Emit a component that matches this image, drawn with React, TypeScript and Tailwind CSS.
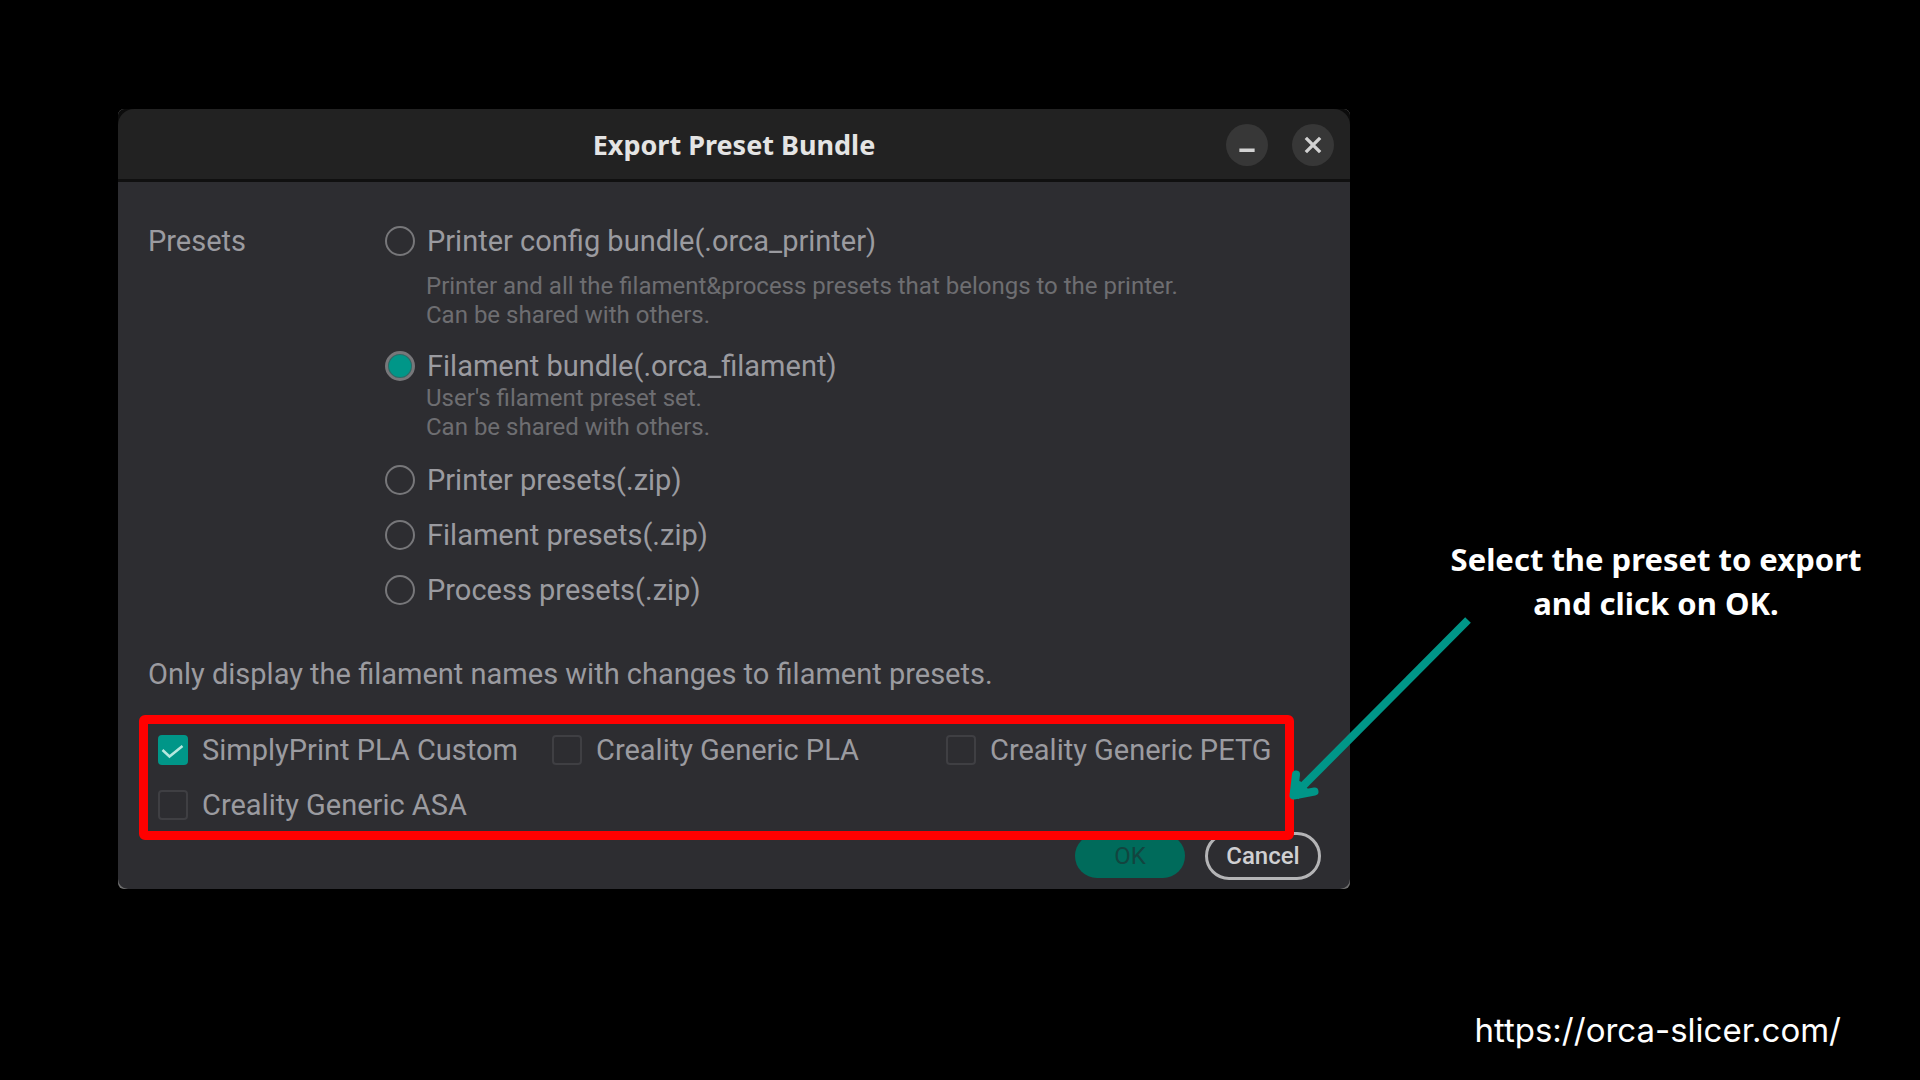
import { useState } from "react";

type PresetOption = {
  id: string;
  label: string;
  description?: string[];
  // spacing below the whole option and above its description
  className: string;
  descriptionClassName?: string;
};

const PRESET_OPTIONS: PresetOption[] = [
  {
    id: "printer-bundle",
    label: "Printer config bundle(.orca_printer)",
    description: [
      "Printer and all the filament&process presets that belongs to the printer.",
      "Can be shared with others.",
    ],
    className: "mb-[18px]",
    descriptionClassName: "mt-[13px]",
  },
  {
    id: "filament-bundle",
    label: "Filament bundle(.orca_filament)",
    description: ["User's filament preset set.", "Can be shared with others."],
    className: "mb-5",
  },
  { id: "printer-zip", label: "Printer presets(.zip)", className: "mb-[19px]" },
  { id: "filament-zip", label: "Filament presets(.zip)", className: "mb-[19px]" },
  { id: "process-zip", label: "Process presets(.zip)", className: "" },
];

const FILAMENTS = [
  "SimplyPrint PLA Custom",
  "Creality Generic PLA",
  "Creality Generic PETG",
  "Creality Generic ASA",
];

function MinimizeIcon() {
  return (
    <svg viewBox="0 0 44 44" className="h-full w-full" aria-hidden="true">
      <path d="M14 27.500h16" stroke="#d2d2d2" strokeWidth="3.5" />
    </svg>
  );
}

function CloseIcon() {
  return (
    <svg viewBox="0 0 44 44" className="h-full w-full" aria-hidden="true">
      <path d="M14.500 14.500l15 15M29.500 14.500l-15 15" stroke="#d2d2d2" strokeWidth="3.5" />
    </svg>
  );
}

function CheckIcon() {
  return (
    <svg viewBox="0 0 30 30" className="pointer-events-none absolute inset-0 h-full w-full" aria-hidden="true">
      <path d="M4.500 15l7 6.500L24.500 11" fill="none" stroke="#b5e8df" strokeWidth="2.5" />
    </svg>
  );
}

function Arrow() {
  return (
    <svg
      viewBox="0 0 190 192"
      className="pointer-events-none absolute top-[78px] -left-16 h-[192px] w-[190px]"
      fill="none"
      stroke="#009688"
      strokeLinejoin="round"
      aria-hidden="true"
    >
      <path d="M182 5L8 180" strokeWidth="8" />
      <path d="M10 159.500L7.500 180.500L28.500 176.500" strokeWidth="8" strokeLinecap="round" />
      <path d="M8 180l10-10" strokeWidth="12" />
    </svg>
  );
}

export default function App() {
  const [preset, setPreset] = useState("filament-bundle");
  const [selected, setSelected] = useState<string[]>(["SimplyPrint PLA Custom"]);

  const toggleFilament = (name: string) => {
    setSelected((prev) => (prev.includes(name) ? prev.filter((n) => n !== name) : [...prev, name]));
  };

  return (
    <main className="flex min-h-screen flex-col bg-black">
      <div className="grid grid-cols-[118fr_1232fr_570fr] pt-[109px]">
        {/* Dialog */}
        <section className="col-start-2 overflow-hidden rounded-md bg-[#707070] font-['Roboto',sans-serif]">
          <header className="grid grid-cols-[1fr_auto_1fr] items-center rounded-t-2xl border-b-[3px] border-[#101010] bg-[#222222] px-4 pt-[15px] pb-[13px] shadow-[0_0_0_4px_#0c0c0c]">
            <h1 className="col-start-2 font-['Noto_Sans',sans-serif] text-[27px] leading-9 font-bold text-[#e4e4e4]">
              Export Preset Bundle
            </h1>
            <div className="flex justify-end gap-6">
              <button type="button" aria-label="Minimize" className="h-[42px] w-[42px] rounded-full bg-[#373737]">
                <MinimizeIcon />
              </button>
              <button type="button" aria-label="Close" className="h-[42px] w-[42px] rounded-full bg-[#373737]">
                <CloseIcon />
              </button>
            </div>
          </header>

          <div className="rounded-b-[10px] bg-[#2d2d31] pt-[41px] pb-[9px] text-[29px] leading-9 text-[#9b9ba0]">
            <div role="radiogroup" aria-labelledby="presets-label" className="grid grid-cols-[237px_1fr] px-[30px]">
              <span id="presets-label">Presets</span>
              <div>
                {PRESET_OPTIONS.map((option) => (
                  <div key={option.id} className={option.className}>
                    <label className="flex items-center gap-3">
                      <input
                        type="radio"
                        name="preset"
                        checked={preset === option.id}
                        onChange={() => setPreset(option.id)}
                        className="h-[30px] w-[30px] appearance-none rounded-full border-2 border-[#77777a] checked:border-[3px] checked:bg-[#009688] checked:bg-clip-padding checked:shadow-[inset_0_0_0_1px_#2f6a66]"
                      />
                      {option.label}
                    </label>
                    {option.description && (
                      <div
                        className={`pl-[41px] text-2xl leading-[29px] text-[#6e6e71] ${option.descriptionClassName ?? ""}`}
                      >
                        {option.description.map((line) => (
                          <p key={line}>{line}</p>
                        ))}
                      </div>
                    )}
                  </div>
                ))}
              </div>
            </div>

            <p className="mt-12 px-[30px]">Only display the filament names with changes to filament presets.</p>

            {/* Highlighted filament list */}
            <div className="relative z-10 mt-[23px] mr-14 ml-[21px] grid grid-cols-[394fr_394fr_339fr] gap-y-[19px] rounded-md border-9 border-[#ff0000] py-2 pl-2.5">
              {FILAMENTS.map((name) => (
                <label key={name} className="flex items-center gap-3.5 whitespace-nowrap">
                  <span className="relative h-[30px] w-[30px] shrink-0">
                    <input
                      type="checkbox"
                      checked={selected.includes(name)}
                      onChange={() => toggleFilament(name)}
                      className="block h-[30px] w-[30px] appearance-none rounded-sm border-2 border-[#3f3f43] checked:border-[#009688] checked:bg-[#009688]"
                    />
                    {selected.includes(name) && <CheckIcon />}
                  </span>
                  {name}
                </label>
              ))}
            </div>

            <div className="-mt-2 flex items-center justify-end gap-5 pr-[29px] text-2xl">
              <button type="button" className="h-11 w-[110px] rounded-full bg-[#006b5b] text-[#12453f]">
                OK
              </button>
              <button
                type="button"
                className="h-12 w-[116px] rounded-full border-[3px] border-[#b4b4b6] font-medium text-[#d0d0d2]"
              >
                Cancel
              </button>
            </div>
          </div>
        </section>

        {/* Callout */}
        <aside className="relative z-20 mt-[428px] pl-[42px] text-center">
          <p className="font-['Noto_Sans',sans-serif] text-[31px] leading-[44px] font-bold text-white">
            Select the preset to export
            <br />
            and click on OK.
          </p>
          <Arrow />
        </aside>
      </div>

      <footer className="mt-auto flex justify-end pr-[79px] pb-[26px]">
        <a
          href="https://orca-slicer.com/"
          className="font-['Inter',sans-serif] text-[33px] leading-[48px] text-white"
        >
          https://orca-slicer.com/
        </a>
      </footer>
    </main>
  );
}
